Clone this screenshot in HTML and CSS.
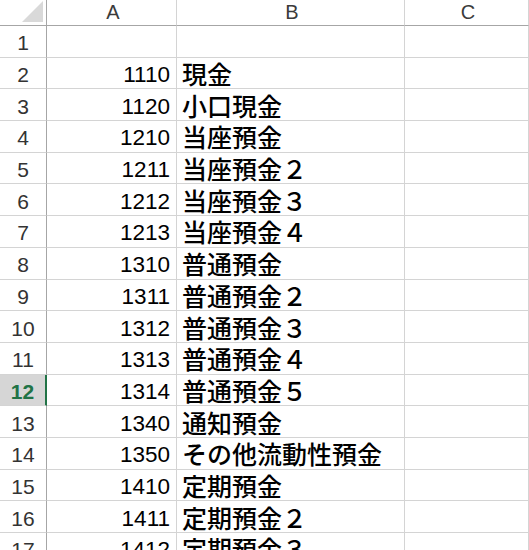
FILE: index.html
```html
<html>
<head>
    <title>勘定科目</title>
    <link rel="stylesheet" href="styles.css">
</head>
<body>
    <div class="sheet">
        <div class="corner"><div class="tri"></div></div>
        <div class="ch">A</div>
        <div class="ch">B</div>
        <div class="ch">C</div>

        <div class="rh">1</div><div class="num"></div><div class="txt"></div><div class="cell"></div>
        <div class="rh">2</div><div class="num">1110</div><div class="txt">現金</div><div class="cell"></div>
        <div class="rh">3</div><div class="num">1120</div><div class="txt">小口現金</div><div class="cell"></div>
        <div class="rh">4</div><div class="num">1210</div><div class="txt">当座預金</div><div class="cell"></div>
        <div class="rh">5</div><div class="num">1211</div><div class="txt">当座預金２</div><div class="cell"></div>
        <div class="rh">6</div><div class="num">1212</div><div class="txt">当座預金３</div><div class="cell"></div>
        <div class="rh">7</div><div class="num">1213</div><div class="txt">当座預金４</div><div class="cell"></div>
        <div class="rh">8</div><div class="num">1310</div><div class="txt">普通預金</div><div class="cell"></div>
        <div class="rh">9</div><div class="num">1311</div><div class="txt">普通預金２</div><div class="cell"></div>
        <div class="rh">10</div><div class="num">1312</div><div class="txt">普通預金３</div><div class="cell"></div>
        <div class="rh">11</div><div class="num">1313</div><div class="txt">普通預金４</div><div class="cell"></div>
        <div class="rh active">12</div><div class="num">1314</div><div class="txt">普通預金５</div><div class="cell"></div>
        <div class="rh">13</div><div class="num">1340</div><div class="txt">通知預金</div><div class="cell"></div>
        <div class="rh">14</div><div class="num">1350</div><div class="txt">その他流動性預金</div><div class="cell"></div>
        <div class="rh">15</div><div class="num">1410</div><div class="txt">定期預金</div><div class="cell"></div>
        <div class="rh">16</div><div class="num">1411</div><div class="txt">定期預金２</div><div class="cell"></div>
        <div class="rh">17</div><div class="num">1412</div><div class="txt">定期預金３</div><div class="cell"></div>
    </div>
</body>
</html>
```

FILE: styles.css
```css
body { margin: 0; background: #ffffff; overflow: hidden; }
.sheet { display: grid; grid-template-columns: 47px 130px 228px 1fr; grid-template-rows: 26px; grid-auto-rows: 31.7px; width: 529px; }
.sheet > div { box-sizing: border-box; border-right: 1px solid #d4d4d4; border-bottom: 1px solid #d4d4d4; display: flex; align-items: center; overflow: visible; white-space: nowrap; }

.corner { justify-content: flex-end; align-items: flex-end !important; padding: 0 3px 3px 0; border-bottom-color: #a6a6a6 !important; border-right-color: #a6a6a6 !important; }
.tri { width: 21px; height: 21px; background: #d9d9d9; clip-path: polygon(100% 0, 100% 100%, 0 100%); }

.ch { justify-content: center; font-family: "Liberation Sans", Arial, sans-serif; font-size: 20px; color: #3b3b3b; border-bottom-color: #a6a6a6 !important; padding-left: 3px; }
.rh { justify-content: center; font-family: "Liberation Sans", Arial, sans-serif; font-size: 21px; color: #333333; border-right-color: #a6a6a6 !important; padding-top: 4px; }
.rh.active { background: #d6d6d6; color: #217346; font-weight: bold; border-right: 2px solid #217346 !important; }

.num { justify-content: flex-end; padding: 4px 6px 0 0; font-family: "Liberation Sans", Arial, sans-serif; font-size: 22.5px; color: #000000; }
.txt { padding: 1px 0 0 5px; font-family: "Noto Sans CJK JP", sans-serif; font-size: 25px; font-weight: 500; line-height: 25px; color: #000000; }
```
